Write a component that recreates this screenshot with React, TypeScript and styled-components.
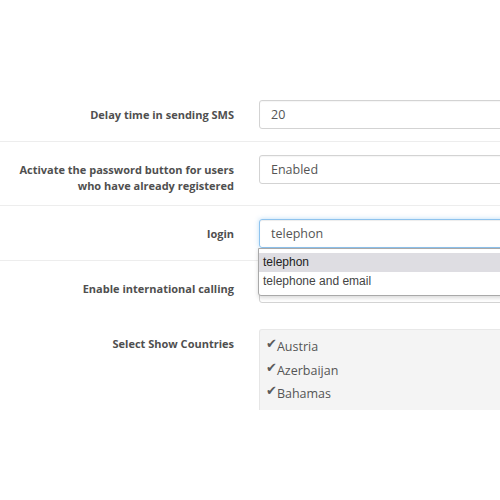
import React from "react";
import styled, { createGlobalStyle } from "styled-components";

const GlobalStyle = createGlobalStyle`
  html, body {
    margin: 0;
    padding: 0;
    background: #fff;
    overflow: hidden;
  }
  body {
    font-family: "Open Sans", "Liberation Sans", Arial, sans-serif;
    color: #555;
  }
`;

const Form = styled.div`
  width: 640px;
  padding-top: 86px;
`;

const Group = styled.div<{ $plain?: boolean }>`
  display: grid;
  grid-template-columns: 249px 1fr;
  padding: 13px 0 12px;
  border-top: 1px solid ${(p) => (p.$plain ? "transparent" : "#ededed")};
  position: relative;
`;

const Label = styled.label`
  text-align: right;
  padding: 7px 15px 0 0;
  margin-bottom: -1px;
  font-size: 11px;
  font-weight: 700;
  line-height: 16px;
  color: #4f4f4f;
`;

const Field = styled.div`
  padding-left: 10px;
  position: relative;
`;

const Input = styled.div<{ $focus?: boolean }>`
  box-sizing: border-box;
  height: 29px;
  padding: 0 11px;
  display: flex;
  align-items: center;
  font-size: 12.5px;
  color: #555;
  border: 1px solid ${(p) => (p.$focus ? "#8ec3ee" : "#d3d3d3")};
  border-radius: 3px;
  box-shadow: ${(p) =>
    p.$focus
      ? "inset 0 1px 1px rgba(0,0,0,.075), 0 0 5px rgba(102,175,233,.45)"
      : "inset 0 1px 1px rgba(0,0,0,.04)"};
`;

const Dropdown = styled.ul`
  position: absolute;
  top: 29px;
  left: 9px;
  width: 320px;
  margin: 0;
  padding: 4px 0 4px;
  list-style: none;
  background: #fff;
  border: 1px solid #a9a9a9;
  border-radius: 0 0 3px 3px;
  box-shadow: 0 2px 4px rgba(0, 0, 0, 0.15);
  z-index: 5;
  font-family: "Liberation Sans", Arial, sans-serif;
  font-size: 12px;
`;

const Option = styled.li<{ $active?: boolean }>`
  height: 19px;
  line-height: 19px;
  padding-left: 4px;
  color: ${(p) => (p.$active ? "#222" : "#444")};
  background: ${(p) => (p.$active ? "#dedde2" : "transparent")};
`;

const Well = styled.div`
  box-sizing: border-box;
  height: 81px;
  overflow: hidden;
  background: #f4f4f4;
  border-top: 1px solid #e8e8e8;
  border-left: 1px solid #e6e6e6;
  border-radius: 3px 0 0 0;
  padding: 5px 6px;
`;

const Check = styled.div`
  display: flex;
  align-items: center;
  height: 23.5px;
  font-size: 12.5px;
  color: #555;
`;

const Tick = styled.span`
  font-family: "DejaVu Sans", sans-serif;
  font-size: 13px;
  color: #5a5a5a;
  position: relative;
  top: -3px;
`;

const countries = ["Austria", "Azerbaijan", "Bahamas"];

export default function App() {
  return (
    <>
      <GlobalStyle />
      <Form>
        <Group $plain>
          <Label>Delay time in sending SMS</Label>
          <Field>
            <Input>20</Input>
          </Field>
        </Group>
        <Group>
          <Label>
            Activate the password button for users who have already registered
          </Label>
          <Field>
            <Input>Enabled</Input>
          </Field>
        </Group>
        <Group style={{ zIndex: 3 }}>
          <Label>login</Label>
          <Field>
            <Input $focus>telephon</Input>
            <Dropdown>
              <Option $active>telephon</Option>
              <Option>telephone and email</Option>
            </Dropdown>
          </Field>
        </Group>
        <Group>
          <Label>Enable international calling</Label>
          <Field>
            <Input>Enabled</Input>
          </Field>
        </Group>
        <Group $plain>
          <Label>Select Show Countries</Label>
          <Field>
            <Well>
              {countries.map((c) => (
                <Check key={c}>
                  <Tick>✔</Tick>
                  {c}
                </Check>
              ))}
            </Well>
          </Field>
        </Group>
      </Form>
    </>
  );
}
